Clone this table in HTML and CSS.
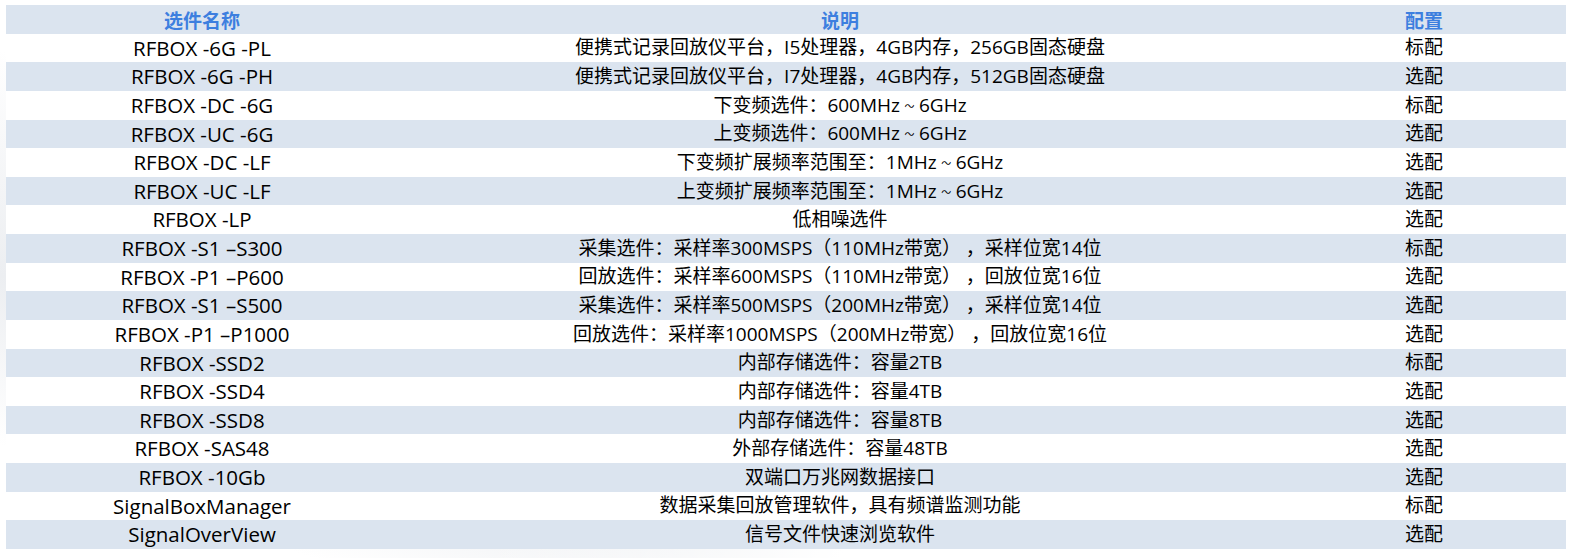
FILE: index.html
```html
<!DOCTYPE html>
<html lang="zh-CN">
<head>
<meta charset="utf-8">
<title>选件配置</title>
<link rel="stylesheet" href="styles.css">
</head>
<body>
<div class="page">
  <div class="table">
    <div class="row head">
      <div class="cell">选件名称</div>
      <div class="cell">说明</div>
      <div class="cell">配置</div>
    </div>
    <div class="row"><div class="cell name">RFBOX -6G -PL</div><div class="cell">便携式记录回放仪平台，I5处理器，4GB内存，256GB固态硬盘</div><div class="cell">标配</div></div>
    <div class="row alt"><div class="cell name">RFBOX -6G -PH</div><div class="cell">便携式记录回放仪平台，I7处理器，4GB内存，512GB固态硬盘</div><div class="cell">选配</div></div>
    <div class="row"><div class="cell name">RFBOX -DC -6G</div><div class="cell">下变频选件：600MHz<span class="tilde">～</span>6GHz</div><div class="cell">标配</div></div>
    <div class="row alt"><div class="cell name">RFBOX -UC -6G</div><div class="cell">上变频选件：600MHz<span class="tilde">～</span>6GHz</div><div class="cell">选配</div></div>
    <div class="row"><div class="cell name">RFBOX -DC -LF</div><div class="cell">下变频扩展频率范围至：1MHz<span class="tilde">～</span>6GHz</div><div class="cell">选配</div></div>
    <div class="row alt"><div class="cell name">RFBOX -UC -LF</div><div class="cell">上变频扩展频率范围至：1MHz<span class="tilde">～</span>6GHz</div><div class="cell">选配</div></div>
    <div class="row"><div class="cell name">RFBOX -LP</div><div class="cell">低相噪选件</div><div class="cell">选配</div></div>
    <div class="row alt"><div class="cell name">RFBOX -S1 –S300</div><div class="cell">采集选件：采样率300MSPS（110MHz带宽） ，采样位宽14位</div><div class="cell">标配</div></div>
    <div class="row"><div class="cell name">RFBOX -P1 –P600</div><div class="cell">回放选件：采样率600MSPS（110MHz带宽） ，回放位宽16位</div><div class="cell">选配</div></div>
    <div class="row alt"><div class="cell name">RFBOX -S1 –S500</div><div class="cell">采集选件：采样率500MSPS（200MHz带宽） ，采样位宽14位</div><div class="cell">选配</div></div>
    <div class="row"><div class="cell name">RFBOX -P1 –P1000</div><div class="cell">回放选件：采样率1000MSPS（200MHz带宽） ，回放位宽16位</div><div class="cell">选配</div></div>
    <div class="row alt"><div class="cell name">RFBOX -SSD2</div><div class="cell">内部存储选件：容量2TB</div><div class="cell">标配</div></div>
    <div class="row"><div class="cell name">RFBOX -SSD4</div><div class="cell">内部存储选件：容量4TB</div><div class="cell">选配</div></div>
    <div class="row alt"><div class="cell name">RFBOX -SSD8</div><div class="cell">内部存储选件：容量8TB</div><div class="cell">选配</div></div>
    <div class="row"><div class="cell name">RFBOX -SAS48</div><div class="cell">外部存储选件：容量48TB</div><div class="cell">选配</div></div>
    <div class="row alt"><div class="cell name">RFBOX -10Gb</div><div class="cell">双端口万兆网数据接口</div><div class="cell">选配</div></div>
    <div class="row"><div class="cell name">SignalBoxManager</div><div class="cell">数据采集回放管理软件，具有频谱监测功能</div><div class="cell">标配</div></div>
    <div class="row alt"><div class="cell name">SignalOverView</div><div class="cell">信号文件快速浏览软件</div><div class="cell">选配</div></div>
  </div>
</div>
</body>
</html>
```
FILE: styles.css
```css
html, body {
  margin: 0;
  padding: 0;
}
body {
  width: 1575px;
  height: 558px;
  overflow: hidden;
  background:
    linear-gradient(115deg, rgba(255,255,255,0) 0%, rgba(255,255,255,0) 40%, rgba(255,255,255,1) 60%),
    linear-gradient(200deg, #ffffff 55%, #eceef1 75%, #ffffff 90%);
  font-family: "Open Sans", "Noto Sans CJK SC", sans-serif;
  color: #000;
}
.page {
  padding: 5px 9px 0 6px;
}
.table {
  display: grid;
  grid-auto-rows: 28.63px;
  width: 1560px;
}
.row {
  display: grid;
  grid-template-columns: 392px 884px 284px;
  align-items: center;
  background: #ffffff;
}
.row.alt,
.row.head {
  background: #dbe4ef;
}
.cell {
  text-align: center;
  font-size: 19px;
  line-height: 1;
  white-space: pre;
  text-spacing-trim: space-all;
}
.cell.name {
  font-size: 20.5px;
}
.tilde {
  display: inline-block;
  width: 19px;
  font-size: 10px;
  text-align: center;
  vertical-align: 2px;
}
.head .cell {
  color: #3d7fdf;
  font-weight: 700;
  font-family: "Noto Sans CJK SC", sans-serif;
}
```
